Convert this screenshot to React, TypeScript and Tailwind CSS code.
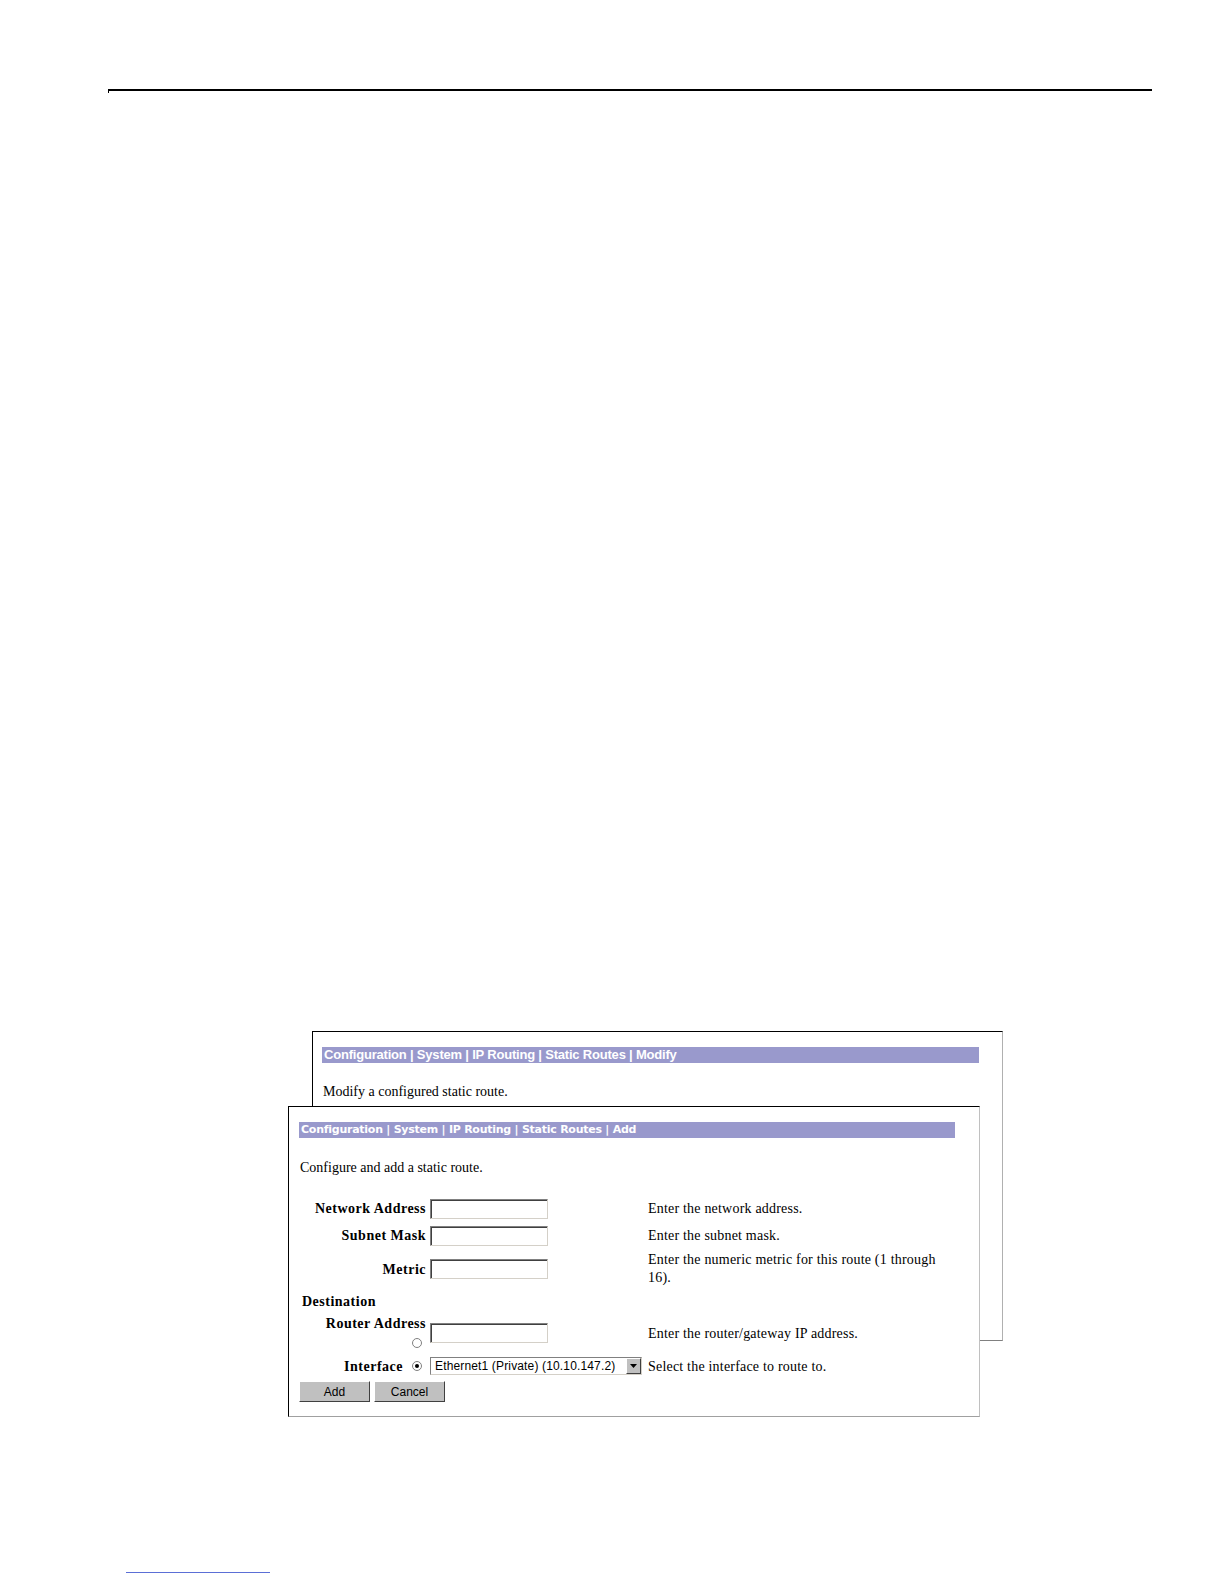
import React from "react";

const serif = { fontFamily: '"Liberation Serif", "Times New Roman", serif' };
const sans = { fontFamily: '"Liberation Sans", Arial, sans-serif' };

function TitleBar({ text, back }: { text: string; back?: boolean }) {
  return (
    <div
      className="h-[16px] bg-[#9999cc] text-white font-bold leading-[16px] pl-[2px] whitespace-nowrap overflow-hidden"
      style={
        back
          ? { ...sans, fontSize: "13px", letterSpacing: "-0.2px" }
          : { fontFamily: '"DejaVu Sans", Verdana, sans-serif', fontSize: "11px", letterSpacing: "-0.25px" }
      }
    >
      {text}
    </div>
  );
}

function TextBox() {
  return (
    <div className="w-[118px] h-[20px] bg-white border border-[#808080] border-r-[#d4d0c8] border-b-[#d4d0c8] shadow-[inset_1px_1px_0_#404040]" />
  );
}

function Radio({ checked }: { checked?: boolean }) {
  return (
    <span className="inline-flex w-[10px] h-[10px] rounded-full border border-[#808080] bg-white items-center justify-center align-middle">
      {checked && <span className="w-[4px] h-[4px] rounded-full bg-black" />}
    </span>
  );
}

function Button({ label }: { label: string }) {
  return (
    <div
      className="w-[71px] h-[21px] bg-[#c0c0c0] border border-white border-r-[#404040] border-b-[#404040] flex items-center justify-center text-[12px] text-black"
      style={sans}
    >
      {label}
    </div>
  );
}

const label = { letterSpacing: "0.5px" };
const desc = { letterSpacing: "0.2px" };

export default function App() {
  return (
    <div className="relative w-[1224px] h-[1584px] bg-white overflow-hidden">
      {/* header rule */}
      <div className="pt-[89px] pl-[108px]">
        <div className="w-[1044px] h-[2px] bg-black" />
        <div className="w-[1px] h-[2px] bg-black" />
      </div>

      {/* screenshot figure */}
      <div className="relative ml-[288px] mt-[938px] w-[720px] h-[392px]">
        {/* back window: Modify */}
        <div className="ml-[24px] w-[691px] h-[310px] border-t border-l border-black border-r border-b border-r-[#b0b0b0] border-b-[#808080] bg-white pt-[15px] pl-[9px]">
          <div className="w-[657px]">
            <TitleBar text="Configuration | System | IP Routing | Static Routes | Modify" back />
          </div>
          <p className="mt-[18px] text-[14px] text-black pl-[1px]" style={serif}>
            Modify a configured static route.
          </p>
        </div>

        {/* front window: Add */}
        <div className="absolute left-0 top-[75px] w-[692px] h-[311px] border-t border-l border-black border-r border-b border-r-[#c0c0c0] border-b-[#a0a0a0] bg-white pt-[15px] pl-[10px]">
          <div className="w-[656px]">
            <TitleBar text="Configuration | System | IP Routing | Static Routes | Add" />
          </div>
          <p className="mt-[19px] text-[14px] text-black pl-[1px]" style={serif}>
            Configure and add a static route.
          </p>

          <div className="mt-[17px] text-[14px] text-black" style={serif}>
            <div className="flex items-center h-[27px]">
              <div className="w-[131px] text-right pr-[4px] font-bold" style={label}>Network Address</div>
              <div className="w-[218px]"><TextBox /></div>
              <div style={desc}>Enter the network address.</div>
            </div>
            <div className="flex items-center h-[27px]">
              <div className="w-[131px] text-right pr-[4px] font-bold" style={label}>Subnet Mask</div>
              <div className="w-[218px]"><TextBox /></div>
              <div style={desc}>Enter the subnet mask.</div>
            </div>
            <div className="flex items-center h-[40px]">
              <div className="w-[131px] text-right pr-[4px] font-bold" style={label}>Metric</div>
              <div className="w-[218px]"><TextBox /></div>
              <div className="w-[296px] leading-[18px]" style={desc}>
                Enter the numeric metric for this route (1 through 16).
              </div>
            </div>
            <div className="font-bold pl-[3px] mt-[2px] h-[22px] leading-[22px]" style={label}>Destination</div>
            <div className="flex items-start h-[38px] pt-[2px]">
              <div className="w-[131px] text-right pr-[4px] font-bold">
                <div className="leading-[18px]" style={label}>Router Address</div>
                <div className="leading-[18px] pr-[4px]"><Radio /></div>
              </div>
              <div className="w-[218px] mt-[8px]"><TextBox /></div>
              <div className="mt-[10px] leading-[18px]" style={desc}>Enter the router/gateway IP address.</div>
            </div>
            <div className="flex items-center h-[30px]">
              <div className="w-[131px] flex items-center justify-end pr-[8px] gap-[9px]">
                <span className="font-bold" style={label}>Interface</span>
                <Radio checked />
              </div>
              <div className="w-[218px]">
                <div className="w-[212px] h-[18px] border border-[#808080] border-r-[#d4d0c8] border-b-[#d4d0c8] bg-white flex items-center">
                  <span className="flex-1 pl-[4px] text-[12px] leading-[16px] whitespace-nowrap" style={{ ...sans, letterSpacing: "0.15px" }}>
                    Ethernet1 (Private) (10.10.147.2)
                  </span>
                  <span className="w-[15px] h-[16px] bg-[#c0c0c0] border border-white border-r-[#404040] border-b-[#404040] flex items-center justify-center">
                    <svg width="7" height="4" viewBox="0 0 7 4">
                      <path d="M0 0h7L3.5 4z" fill="#000" />
                    </svg>
                  </span>
                </div>
              </div>
              <div style={desc}>Select the interface to route to.</div>
            </div>
          </div>

          <div className="flex gap-[4px]">
            <Button label="Add" />
            <Button label="Cancel" />
          </div>
        </div>
      </div>

      {/* footer link rule */}
      <div className="absolute left-[126px] top-[1572px] w-[144px] h-px bg-[#5b6fd6]" />
    </div>
  );
}
